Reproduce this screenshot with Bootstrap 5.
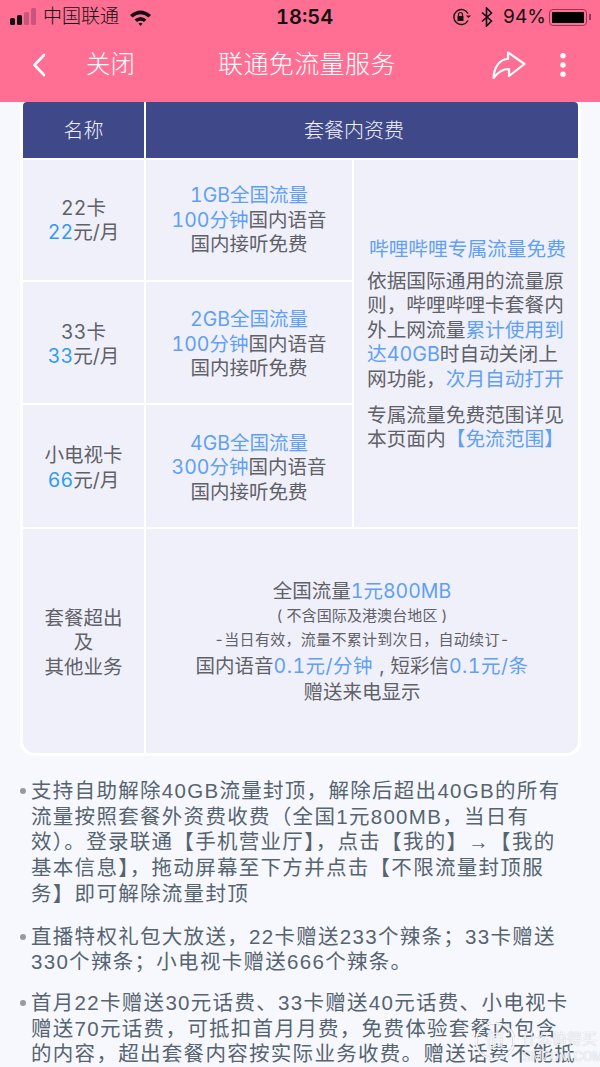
<!DOCTYPE html>
<html lang="zh-CN">
<head>
  <meta charset="UTF-8">
  <title>联通免流量服务</title>
  <link href="https://cdn.jsdelivr.net/npm/bootstrap@5.3.3/dist/css/bootstrap.min.css" rel="stylesheet">
  <style>
    html, body { height: 1067px; overflow: hidden; }
    body {
      background: #f6f8fe;
      color: #5f6168;
      font-family: Inter, "Noto Sans CJK SC", sans-serif;
      font-variant-numeric: tabular-nums;
      position: relative;
    }
    .top-wrap { background: #ff6f94; height: 102px; color: #fff; }
    .status-row { height: 34px; color: #111; padding: 0 9px 0 10px; font-size: 19px; position: relative; }
    .sig-wrap { gap: 2px; height: 17px; margin-top: -1px; }
    .sig-bar { width: 5px; background: #111; border-radius: 1.5px; display: block; }
    .sig-dim { background: #c9567a; }
    .sig-1 { height: 7px; }
    .sig-2 { height: 10px; }
    .sig-3 { height: 13px; }
    .sig-4 { height: 17px; }
    .carrier { margin-left: 7px; margin-right: 10px; font-weight: 300; }
    .clock { position: absolute; left: 276px; top: 3px; font-size: 20px; font-weight: 600; line-height: 28px; }
    .bt-icon { margin-left: 9px; }
    .batt-pct { margin-left: 10px; font-size: 19px; }
    .batt-box { width: 38px; height: 17px; border: 1.5px solid #8f3a58; border-radius: 4px; padding: 2px; margin-left: 3px; }
    .batt-fill { height: 100%; background: #000; border-radius: 1px; }
    .batt-tip { width: 2px; height: 6px; background: #8f3a58; margin-left: 2px; }
    .title-row { height: 68px; font-weight: 300; padding-bottom: 7px; }
    .back-icon { margin-left: 32px; }
    .close-txt { margin-left: 40px; font-size: 24.5px; }
    .page-title { margin-left: 83px; font-size: 25px; letter-spacing: .4px; }
    .more-icon { margin-left: 34px; margin-right: 34px; }
    .plan-wrap {
      width: 561px;
      margin-left: 20px;
      padding: 0 3px 3px;
      background: #fff;
      border-radius: 0 0 14px 14px;
    }
    .plan-grid {
      display: grid;
      grid-template-columns: 121px 206px 224px;
      grid-template-rows: 56px 120px 121px 122px 224px;
      gap: 2px;
      font-size: 19.5px;
      line-height: 24.5px;
      text-align: center;
    }
    .plan-grid > div { background: #f0f0fa; display: flex; flex-direction: column; justify-content: center; align-items: center; }
    .plan-grid > .head-cell { background: #3f4989; color: #f2f2f8; font-size: 20px; font-weight: 300; padding-top: 2px; }
    .head-cell.head-a { border-top-left-radius: 4px; }
    .plan-grid > .head-b { grid-column: span 2; border-top-right-radius: 4px; padding-right: 16px; }
    .plan-grid > .low-cell { padding-top: 3px; }
    .plan-grid > .free-cell { grid-row: span 3; align-items: flex-start; text-align: left; padding: 1.5px 8px 0 13px; font-size: 19.7px; }
    .plan-grid > .over-cell { border-bottom-left-radius: 12px; padding-top: 3px; }
    .plan-grid > .over-main { grid-column: span 2; border-bottom-right-radius: 12px; padding-top: 1px; }
    .over-main > span { line-height: 26px; }
    .over-main > .tiny-a { font-size: 15px; line-height: 24px; letter-spacing: .1px; }
    .over-main > .tiny-b { font-size: 15px; line-height: 23px; letter-spacing: .3px; }
    .over-main > .fee-line { margin-top: 2.5px; }
    .fee-line .hl { letter-spacing: .5px; }
    .comma-gap { padding: 0 6px; }
    .hl { color: #5fa0f5; }
    .hl-n { color: #2f9bf3; }
    .free-head { margin: 0 0 7px 2px; }
    .free-foot { margin-top: 11.5px; }
    .note-list {
      list-style: none;
      margin: 0;
      padding: 22px 0 0 31px;
      font-family: "Liberation Sans", "Noto Sans CJK SC", sans-serif;
      font-size: 20.5px;
      line-height: 25.7px;
      letter-spacing: 1.3px;
      color: #566470;
      white-space: nowrap;
    }
    .note-list li { position: relative; margin-bottom: 17px; }
    .note-list li:nth-child(2) { margin-bottom: 15px; }
    .note-list li::before {
      content: "";
      position: absolute;
      left: -11px;
      top: 10px;
      width: 6px;
      height: 6px;
      border-radius: 50%;
      background: #999;
    }
    .wm { position: absolute; left: 475px; top: 1022px; color: rgba(255,255,255,.85); line-height: 1; text-shadow: 0 0 1px rgba(90,100,110,.45); }
    .wm-ring { position: absolute; left: 0; top: 0; }
    .wm-zhi { position: absolute; left: 10px; top: 9px; font-size: 20px; }
    .wm-a { position: absolute; left: 47px; top: 9px; font-size: 15px; white-space: nowrap; }
    .wm-b { position: absolute; left: 48px; top: 29px; font-size: 12.5px; white-space: nowrap; }
  </style>
</head>
<body>
  <div class="top-wrap">
    <div class="status-row d-flex align-items-center">
      <div class="sig-wrap d-flex align-items-end">
        <span class="sig-bar sig-1"></span>
        <span class="sig-bar sig-2"></span>
        <span class="sig-bar sig-dim sig-3"></span>
        <span class="sig-bar sig-dim sig-4"></span>
      </div>
      <span class="carrier">中国联通</span>
      <svg width="23" height="17" viewBox="0 0 23 17">
        <path d="M1 6 Q11.500 -3 22 6 L19.500 8.500 Q11.500 2 3.500 8.500Z M5.500 10.500 Q11.500 5.500 17.500 10.500 L15 13 Q11.500 10.500 8 13Z M9.500 14.500 Q11.500 13 13.500 14.500 L11.500 17Z" fill="#111"/>
      </svg>
      <span class="clock">18:54</span>
      <div class="ms-auto d-flex align-items-center">
        <svg width="20" height="18" viewBox="0 0 20 18" fill="none" stroke="#111" stroke-width="1.4">
          <path d="M16 12.500 A7.500 7.500 0 1 1 16 5.500"/>
          <path d="M19 7.500 L16.500 10 L14 7.500Z" fill="#111" stroke="none"/>
          <rect x="5.500" y="8" width="6" height="5" fill="#111" stroke="none"/>
          <path d="M6.500 8 V6.500 A2 2 0 0 1 10.500 6.500 V8" stroke-width="1.200"/>
        </svg>
        <svg class="bt-icon" width="12" height="20" viewBox="0 0 12 20" fill="none" stroke="#111" stroke-width="1.600">
          <path d="M1 5.500 L10.500 14 L5.500 19 V1 L10.500 6 L1 14.500"/>
        </svg>
        <span class="batt-pct">94%</span>
        <div class="batt-box"><div class="batt-fill"></div></div>
        <span class="batt-tip"></span>
      </div>
    </div>
    <div class="title-row d-flex align-items-center">
      <svg class="back-icon" width="14" height="24" viewBox="0 0 14 24" fill="none" stroke="#fff" stroke-width="2.600" stroke-linecap="round" stroke-linejoin="round">
        <path d="M12 2 L2.500 12 L12 22"/>
      </svg>
      <span class="close-txt">关闭</span>
      <span class="page-title">联通免流量服务</span>
      <svg class="ms-auto" width="34" height="28" viewBox="0 0 34 28" fill="none" stroke="#fff" stroke-width="2.200" stroke-linejoin="round" stroke-linecap="round">
        <path d="M16 1.500 L32.500 13 L17 25 V18 C11 18 6 21 1.500 27 C2 16 8 8 16 8Z"/>
      </svg>
      <svg class="more-icon" width="6" height="24" viewBox="0 0 6 24" fill="#fff">
        <circle cx="3" cy="2.700" r="2.700"/><circle cx="3" cy="12" r="2.700"/><circle cx="3" cy="21.300" r="2.700"/>
      </svg>
    </div>
  </div>

  <div class="plan-wrap">
    <div class="plan-grid">
      <div class="head-cell head-a">名称</div>
      <div class="head-cell head-b">套餐内资费</div>

      <div><span>22卡</span><span><span class="hl-n">22</span>元/月</span></div>
      <div><span class="hl">1GB全国流量</span><span><span class="hl">100分钟</span>国内语音</span><span>国内接听免费</span></div>
      <div class="free-cell">
        <p class="hl free-head">哔哩哔哩专属流量免费</p>
        <div>依据国际通用的流量原<br>则，哔哩哔哩卡套餐内<br>外上网流量<span class="hl">累计使用到</span><br><span class="hl">达40GB</span>时自动关闭上<br>网功能，<span class="hl">次月自动打开</span></div>
        <div class="free-foot">专属流量免费范围详见<br>本页面内<span class="hl">【免流范围】</span></div>
      </div>

      <div class="low-cell"><span>33卡</span><span><span class="hl-n">33</span>元/月</span></div>
      <div class="low-cell"><span class="hl">2GB全国流量</span><span><span class="hl">100分钟</span>国内语音</span><span>国内接听免费</span></div>

      <div class="low-cell"><span>小电视卡</span><span><span class="hl-n">66</span>元/月</span></div>
      <div class="low-cell"><span class="hl">4GB全国流量</span><span><span class="hl">300分钟</span>国内语音</span><span>国内接听免费</span></div>

      <div class="over-cell"><span>套餐超出</span><span>及</span><span>其他业务</span></div>
      <div class="over-main">
        <span>全国流量<span class="hl">1元800MB</span></span>
        <span class="tiny-a">( 不含国际及港澳台地区 )</span>
        <span class="tiny-b">-当日有效，流量不累计到次日，自动续订-</span>
        <span class="fee-line">国内语音<span class="hl">0.1元/分钟</span><span class="comma-gap">,</span>短彩信<span class="hl">0.1元/条</span></span>
        <span>赠送来电显示</span>
      </div>
    </div>
  </div>

  <ul class="note-list">
    <li>支持自助解除40GB流量封顶，解除后超出40GB的所有<br>流量按照套餐外资费收费（全国1元800MB，当日有<br>效）。登录联通【手机营业厅】，点击【我的】→【我的<br>基本信息】，拖动屏幕至下方并点击【不限流量封顶服<br>务】即可解除流量封顶</li>
    <li>直播特权礼包大放送，22卡赠送233个辣条；33卡赠送<br>330个辣条；小电视卡赠送666个辣条。</li>
    <li>首月22卡赠送30元话费、33卡赠送40元话费、小电视卡<br>赠送70元话费，可抵扣首月月费，免费体验套餐内包含<br>的内容，超出套餐内容按实际业务收费。赠送话费不能抵</li>
  </ul>

  <div class="wm">
    <svg class="wm-ring" width="40" height="38" viewBox="0 0 40 38" fill="none" stroke-width="2">
      <ellipse cx="20" cy="19" rx="19" ry="18" stroke="rgba(90,100,110,.3)" stroke-width="3"/>
      <ellipse cx="20" cy="19" rx="19" ry="18" stroke="rgba(255,255,255,.9)"/>
    </svg>
    <span class="wm-zhi">值</span>
    <span class="wm-a">什么值得买</span>
    <span class="wm-b">SMZDM.COM</span>
  </div>

  <script src="https://cdn.jsdelivr.net/npm/bootstrap@5.3.3/dist/js/bootstrap.bundle.min.js"></script>
</body>
</html>
